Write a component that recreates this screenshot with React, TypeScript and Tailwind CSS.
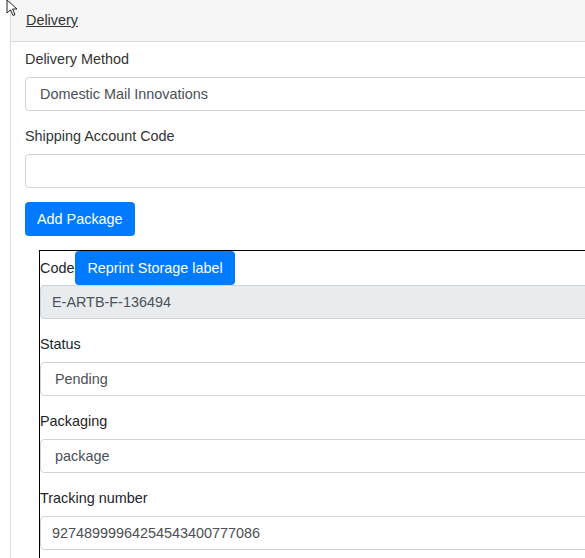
export default function App() {
  const font = { fontFamily: '"Liberation Sans", Arial, sans-serif' }
  const inputCls =
    "h-[34px] w-full border border-[#ced4da] rounded-[4px] bg-white text-[14.4px] text-[#495057] flex items-center pt-[2px]"
  const labelCls = "block text-[14.4px] leading-[23px] mb-[6px]"
  const btnCls = "h-[34px] px-[12px] pt-[2px] rounded-[4px] bg-[#007bff] text-white text-[14.4px]"

  return (
    <div className="relative w-[585px] h-[558px] overflow-hidden bg-white" style={font}>
      {/* card */}
      <div className="ml-[10px] w-[700px] min-h-[600px] border-l border-[#dcdcdc]">
        <div className="h-[42px] bg-[#f6f6f6] border-b border-[#dadada] px-[15px] flex items-center">
          <span className="text-[14.4px] text-[#333] underline leading-[21px]">Delivery</span>
        </div>

        <div className="px-[14px] pt-[6px]">
          <div className="mb-[14px]">
            <label className={labelCls + " text-[#333]"}>Delivery Method</label>
            <div className={inputCls + " pl-[14px]"}>Domestic Mail Innovations</div>
          </div>

          <div className="mb-[14px]">
            <label className={labelCls + " text-[#333]"}>Shipping Account Code</label>
            <div className={inputCls} />
          </div>

          <button className={btnCls + " mb-[14px]"}>Add Package</button>

          {/* package */}
          <div className="ml-[14px] border border-black text-[#212529]">
            <div className="flex items-center">
              <span className="text-[14.4px] leading-[21px] mr-[1px]">Code</span>
              <button className={btnCls}>Reprint Storage label</button>
            </div>
            <div className={inputCls + " !bg-[#e9ecef] pl-[11px] mb-[14px]"}>E-ARTB-F-136494</div>

            <div className="mb-[14px]">
              <label className={labelCls}>Status</label>
              <div className={inputCls + " pl-[14px]"}>Pending</div>
            </div>

            <div className="mb-[14px]">
              <label className={labelCls}>Packaging</label>
              <div className={inputCls + " pl-[14px]"}>package</div>
            </div>

            <div className="mb-[14px]">
              <label className={labelCls}>Tracking number</label>
              <div className={inputCls + " pl-[11px]"}>92748999964254543400777086</div>
            </div>
          </div>
        </div>
      </div>

      {/* mouse pointer */}
      <svg className="absolute left-[6px] top-[-1px]" width="14" height="18" viewBox="0 0 14 18">
        <path
          d="M1 1 L1 14 L4.5 10.8 L7 16.5 L9 15.6 L6.6 10 L11 10 Z"
          fill="white"
          stroke="#222"
          strokeWidth="1"
          strokeLinejoin="round"
        />
      </svg>
    </div>
  )
}
